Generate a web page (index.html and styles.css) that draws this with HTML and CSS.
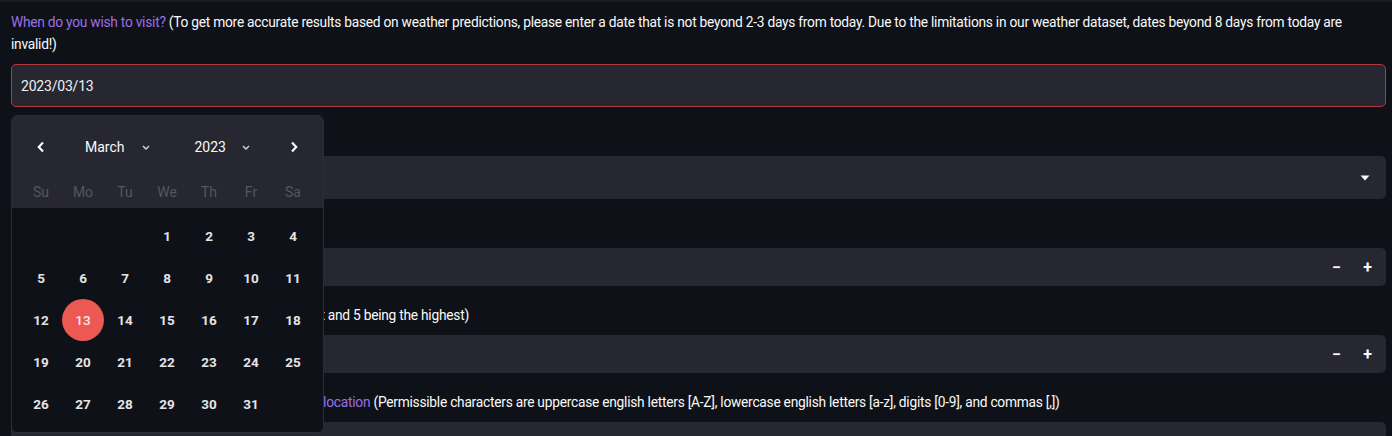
FILE: index.html
```html
<!DOCTYPE html>
<html lang="en">
<head>
<meta charset="utf-8">
<title>Trip planner</title>
<link rel="stylesheet" href="styles.css">
</head>
<body>
<div class="topline"></div>
<main class="form">
  <section class="widget">
    <label class="label"><span class="q">When do you wish to visit?</span> (To get more accurate results based on weather predictions, please enter a date that is not beyond 2-3 days from today. Due to the limitations in our weather dataset, dates beyond 8 days from today are invalid!)</label>
    <div class="field field-tall field-focus"><span class="value">2023/03/13</span></div>
  </section>

  <section class="widget">
    <label class="label"><span class="q">What kind of trip are you planning?</span></label>
    <div class="field field-tall field-select">
      <span class="value"></span>
      <svg class="caret" width="10" height="6" viewBox="0 0 10 6"><path d="M0.5 0.5h9L5 5.5z" fill="#fafafa"/></svg>
    </div>
  </section>

  <section class="widget">
    <label class="label"><span class="q">How many people are travelling?</span></label>
    <div class="field field-num">
      <span class="value"></span>
      <span class="step">&minus;</span><span class="step">+</span>
    </div>
  </section>

  <section class="widget">
    <label class="label"><span class="q">What is your desired budget level?</span> (1 being the lowest and 5 being the highest)</label>
    <div class="field field-num">
      <span class="value"></span>
      <span class="step">&minus;</span><span class="step">+</span>
    </div>
  </section>

  <section class="widget">
    <label class="label"><span class="q">Please enter the name of your current city, or starting location</span> (Permissible characters are uppercase english letters [A-Z], lowercase english letters [a-z], digits [0-9], and commas [,])</label>
    <div class="field field-tall"></div>
  </section>
</main>

<div class="calendar">
  <div class="cal-head">
    <div class="cal-nav">
      <span class="arrow">
        <svg width="10" height="12" viewBox="0 0 10 12"><path d="M7 1.5L2.8 6L7 10.5" fill="none" stroke="#fafafa" stroke-width="2.2"/></svg>
      </span>
      <span class="picker picker-month">March <svg class="chev" width="8" height="5" viewBox="0 0 8 5"><path d="M1 1l3 3l3-3" fill="none" stroke="#d8d8dc" stroke-width="1.4"/></svg></span>
      <span class="picker picker-year">2023 <svg class="chev" width="8" height="5" viewBox="0 0 8 5"><path d="M1 1l3 3l3-3" fill="none" stroke="#d8d8dc" stroke-width="1.4"/></svg></span>
      <span class="arrow">
        <svg width="10" height="12" viewBox="0 0 10 12"><path d="M3 1.5L7.2 6L3 10.5" fill="none" stroke="#fafafa" stroke-width="2.2"/></svg>
      </span>
    </div>
    <div class="cal-grid cal-week">
      <span>Su</span><span>Mo</span><span>Tu</span><span>We</span><span>Th</span><span>Fr</span><span>Sa</span>
    </div>
  </div>
  <div class="cal-grid cal-days">
    <span></span><span></span><span></span><span>1</span><span>2</span><span>3</span><span>4</span>
    <span>5</span><span>6</span><span>7</span><span>8</span><span>9</span><span>10</span><span>11</span>
    <span>12</span><span class="sel">13</span><span>14</span><span>15</span><span>16</span><span>17</span><span>18</span>
    <span>19</span><span>20</span><span>21</span><span>22</span><span>23</span><span>24</span><span>25</span>
    <span>26</span><span>27</span><span>28</span><span>29</span><span>30</span><span>31</span><span></span>
  </div>
</div>
</body>
</html>
```

FILE: styles.css
```css
* { box-sizing: border-box; }

html, body {
  margin: 0;
  padding: 0;
  background: #0e1117;
  color: #fafafa;
  font-family: "Roboto", "Open Sans", sans-serif;
  overflow: hidden;
}

body {
  width: 1392px;
  height: 436px;
  position: relative;
}

.topline {
  height: 2px;
  background: #1b1d23;
}

.form {
  display: flex;
  flex-direction: column;
  gap: 18px;
  padding: 9px 6px 0 11px;
}

.widget {
  display: flex;
  flex-direction: column;
}

.label {
  font-size: 13.75px;
  line-height: 22px;
  letter-spacing: -0.25px;
  color: #fafafa;
  margin-bottom: 9px;
  padding-right: 30px;
}

.q { color: #9c6ee6; }

.field {
  background: #262730;
  border-radius: 5px;
  display: flex;
  align-items: center;
  height: 38px;
  padding-left: 9px;
}

.field-tall { height: 43px; }

.field-focus { border: 1px solid #b4393f; }

.value {
  flex: 1;
  font-size: 14px;
  color: #f0f0f2;
  letter-spacing: -0.2px;
}

.caret { margin-right: 16px; }

.step {
  width: 31px;
  text-align: center;
  font-size: 16px;
  font-weight: 700;
  color: #fafafa;
}

.step:last-child { margin-right: 3px; }

/* calendar popover */
.calendar {
  position: absolute;
  left: 11px;
  top: 115px;
  width: 313px;
  height: 318px;
  border: 1px solid #2b2c35;
  border-radius: 6px;
  background: #0e1117;
  overflow: hidden;
}

.cal-head {
  background: #262730;
  height: 92px;
  padding: 9px 8px 0 8px;
}

.cal-nav {
  display: flex;
  align-items: center;
  height: 44px;
  font-size: 14px;
  color: #fafafa;
}

.arrow {
  width: 42px;
  display: flex;
  justify-content: center;
}

.picker {
  display: flex;
  align-items: center;
}

.picker-month { margin-left: 23px; gap: 17px; }
.picker-year { margin-left: 45px; margin-right: auto; gap: 16px; }

.chev { margin-top: 1px; }

.cal-grid {
  display: grid;
  grid-template-columns: repeat(7, 42px);
}

.cal-week {
  margin-top: 7px;
  height: 32px;
  align-items: center;
  font-size: 14px;
  color: #55565f;
}

.cal-week span { text-align: center; }

.cal-days {
  padding: 7px 8px 0 8px;
  grid-auto-rows: 42px;
  font-size: 13.5px;
  font-weight: 700;
  color: #e4e4e8;
}

.cal-days span {
  display: flex;
  align-items: center;
  justify-content: center;
}

.cal-days .sel {
  background: #ec5953;
  border-radius: 50%;
  color: #ffe8ea;
  font-weight: 500;
}
```
